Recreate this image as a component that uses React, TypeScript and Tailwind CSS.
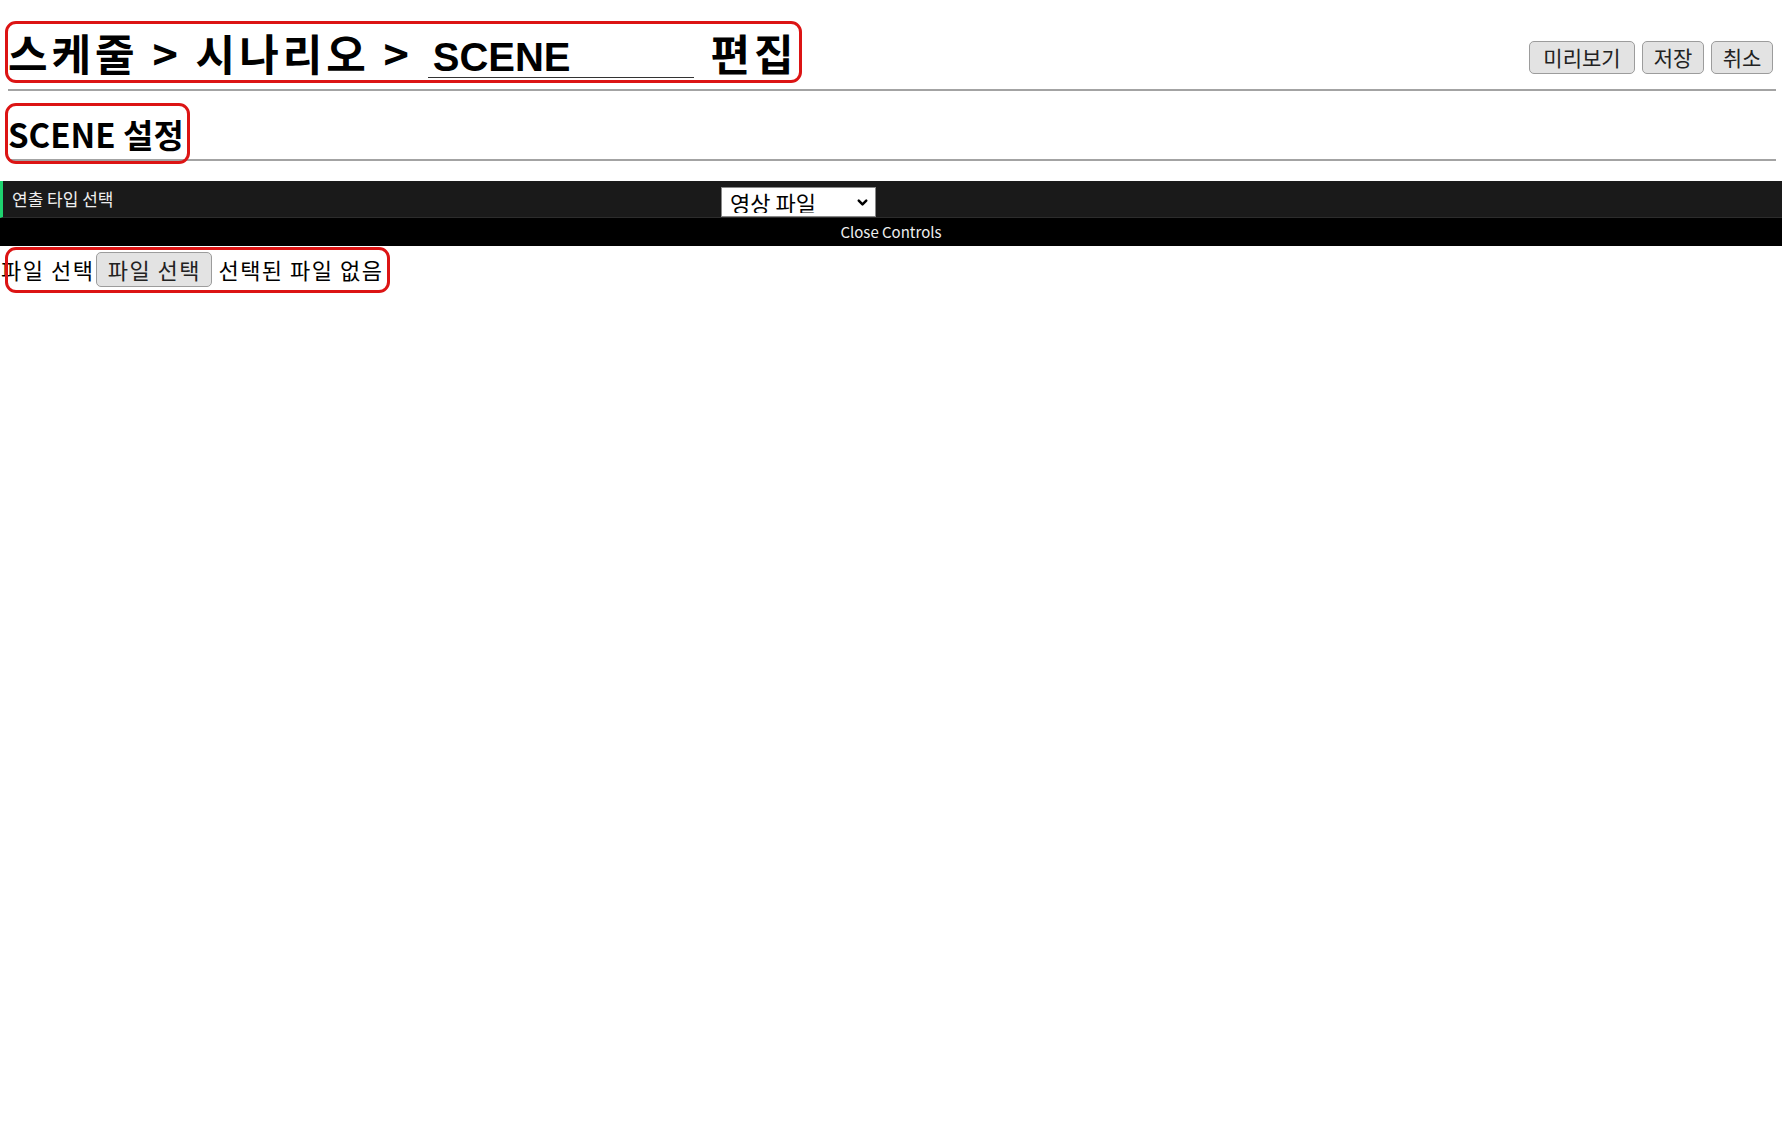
import { ChevronDown } from "lucide-react";

const font = "font-['Noto_Sans_CJK_KR','Noto_Sans',sans-serif]";

// red highlight drawn over an element
function Mark({ className }: { className: string }) {
    return <span className={`pointer-events-none absolute rounded-[11px] border-[3px] border-[#dc1414] ${className}`} />;
}

function GrayButton({ label, className = "" }: { label: string; className?: string }) {
    return (
        <button
            className={`flex items-center justify-center rounded-[5px] border border-[#9c9c9c] bg-[#e3e3e3] text-[#222] ${className}`}
        >
            {label}
        </button>
    );
}

export default function App() {
    return (
        <div className={`${font} min-h-[1125px] bg-white text-black`}>
            {/* Header */}
            <div className="px-2">
                <div className="flex items-start justify-between pt-[24px]">
                    <h1 className="relative h-[56px] whitespace-nowrap text-[43px] font-bold leading-[56px] tracking-[4px]">
                        <Mark className="-left-[3px] -right-[4px] -top-[3px] -bottom-[3px]" />
                        스케줄 &gt; 시나리오 &gt;{" "}
                        <input
                            readOnly
                            value="SCENE"
                            className="ml-[1px] h-[40px] w-[266px] border-b border-[#333] bg-transparent px-[5px] align-baseline font-['Liberation_Sans',Arial,sans-serif] text-[40px] font-bold leading-none tracking-normal outline-none"
                        />{" "}
                        <span className="ml-[3px]">편집</span>
                    </h1>
                    <div className="mr-[3px] flex gap-[7px] pt-[17px] text-[21px]">
                        <GrayButton label="미리보기" className="h-[33px] w-[106px]" />
                        <GrayButton label="저장" className="h-[33px] w-[62px]" />
                        <GrayButton label="취소" className="h-[33px] w-[62px]" />
                    </div>
                </div>
                <div className="mt-[9px] h-[2px] bg-[#a3a3a3]" />

                <h2 className="relative mt-[20px] h-[47px] w-fit whitespace-nowrap text-[33px] font-bold leading-[47px]">
                    <Mark className="-left-[3px] -right-[6px] -top-[8px] -bottom-[6px]" />
                    SCENE 설정
                </h2>
                <div className="mt-[1px] h-[2px] bg-[#a3a3a3]" />
            </div>

            {/* Controls panel */}
            <div className="mr-[2px] mt-[20px]">
                <div className="flex h-[37px] border-b border-l-[3px] border-b-[#2c2c2c] border-l-[#1ed36f] bg-[#1a1a1a]">
                    <div className="flex w-[718px] items-center pl-[9px] text-[17px] text-[#eee]">연출 타입 선택</div>
                    <div className="relative self-end">
                        <select className="h-[30px] w-[155px] appearance-none border border-[#888] bg-white pl-[8px] text-[22px] leading-none text-black outline-none">
                            <option>영상 파일</option>
                        </select>
                        <ChevronDown className="pointer-events-none absolute right-[6px] top-[8px] h-[15px] w-[15px]" strokeWidth={4} />
                    </div>
                </div>
                <div className="flex h-[28px] items-center justify-center bg-black text-[15px] text-[#eee]">Close Controls</div>
            </div>

            {/* File row */}
            <div className="relative flex h-[47px] w-fit items-center whitespace-nowrap text-[22px] tracking-[1.5px]">
                <Mark className="left-[5px] -right-[7px] top-[1px] bottom-0" />
                <span className="ml-[1px]">파일 선택</span>
                <GrayButton label="파일 선택" className="ml-[2px] h-[35px] w-[116px] rounded-[4px]" />
                <span className="ml-[6px]">선택된 파일 없음</span>
            </div>
        </div>
    );
}
